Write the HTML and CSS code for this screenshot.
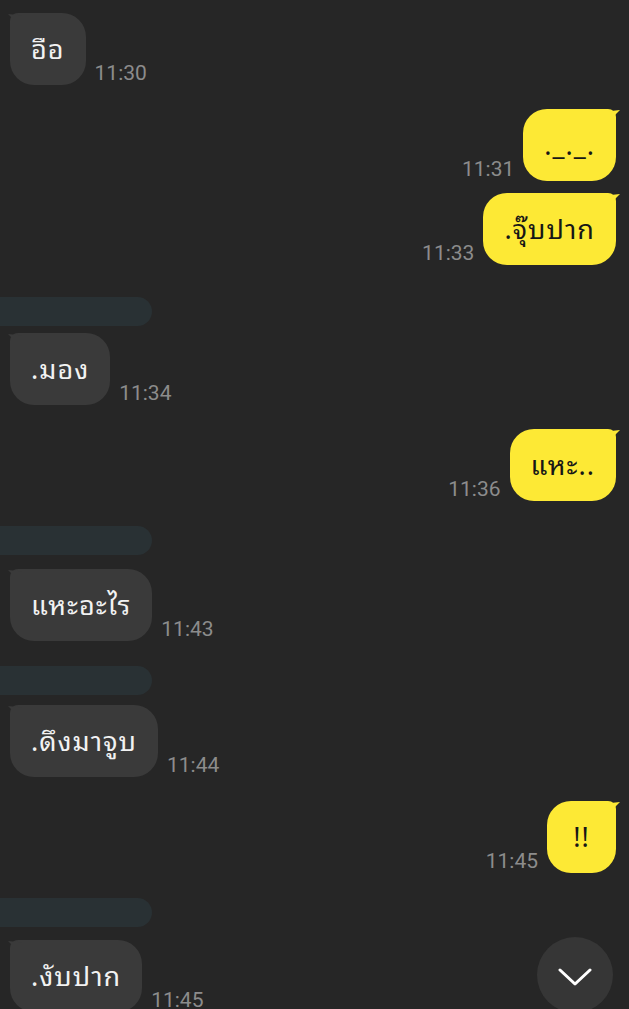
FILE: index.html
```html
<!DOCTYPE html>
<html lang="th">
<head>
<meta charset="UTF-8">
<title>Chat</title>
<link rel="stylesheet" href="styles.css">
</head>
<body>

<!-- ░░ messages ░░ -->
<main id="chat">
  <div class="row in"><div class="bubble">อือ</div><span class="time">11:30</span></div>
  <div class="row out gap-lg"><span class="time">11:31</span><div class="bubble">._._.</div></div>
  <div class="row out gap-sm"><span class="time">11:33</span><div class="bubble">.จุ๊บปาก</div></div>

  <div class="name first"></div>
  <div class="row in" style="margin-top:7px"><div class="bubble">.มอง</div><span class="time">11:34</span></div>
  <div class="row out gap-lg"><span class="time">11:36</span><div class="bubble">แหะ..</div></div>

  <div class="name"></div>
  <div class="row in" style="margin-top:14px"><div class="bubble">แหะอะไร</div><span class="time">11:43</span></div>

  <div class="name"></div>
  <div class="row in" style="margin-top:10px"><div class="bubble">.ดึงมาจูบ</div><span class="time">11:44</span></div>
  <div class="row out gap-lg"><span class="time">11:45</span><div class="bubble">!!</div></div>

  <div class="name"></div>
  <div class="row in" style="margin-top:13px"><div class="bubble">.งับปาก</div><span class="time">11:45</span></div>
</main>

<!-- ░░ jump to bottom ░░ -->
<button id="toBottom" title="Scroll down">
  <svg width="34" height="20" viewBox="0 0 34 20"><path d="M2 3 L17 17 L32 3" fill="none" stroke="#fff" stroke-width="3" stroke-linecap="round" stroke-linejoin="round"/></svg>
</button>

</body>
</html>
```

FILE: styles.css
```css
/* ===== colours ===== */
:root{ --bg:#262626; --in:#3a3a3a; --out:#fde935; --time:#8c8c8c; --name:#293134 }

/* ===== global ===== */
html,body{margin:0;height:100%;overflow:hidden}
body{background:var(--bg);font-family:"Noto Sans Thai Looped","Loma","Garuda","Tlwg Typo","Noto Sans","Noto Sans Thai",Roboto,sans-serif}

/* ---------- rows ---------- */
#chat{padding:13px 13px 0 8px}
.row{display:flex;align-items:flex-end;gap:9px}
.row.out{justify-content:flex-end}
.gap-lg{margin-top:24px}
.gap-sm{margin-top:12px}

.time{font-family:Roboto,sans-serif;font-size:21px;color:var(--time);padding-bottom:1px;line-height:1}

/* ---------- bubbles ---------- */
.bubble{
  position:relative;height:72px;min-width:69px;box-sizing:border-box;padding:0 21px 5px;
  display:flex;align-items:center;justify-content:center;font-size:27px;letter-spacing:1px;border-radius:24px
}
.in .bubble{background:var(--in);color:#f2f2f2;border-top-left-radius:8px;margin-left:2px}
.out .bubble{background:var(--out);color:#161616;border-top-right-radius:8px}
/* little tails on top corners */
.bubble::before{content:"";position:absolute;top:1px;width:14px;height:14px;background:inherit}
.in .bubble::before{left:-2px;clip-path:polygon(0 0,100% 10%,100% 100%)}
.out .bubble::before{right:-4px;clip-path:polygon(100% 0,0 10%,0 100%)}

/* ---------- blurred name bars ---------- */
.name{width:152px;height:29px;margin:25px 0 0 -8px;background:var(--name);border-radius:0 15px 15px 0}
.name.first{margin-top:32px}

/* ---------- scroll button ---------- */
#toBottom{
  position:fixed;left:537px;top:937px;width:76px;height:76px;border:none;border-radius:50%;
  background:#363636;display:flex;align-items:center;justify-content:center;padding:0;padding-top:4px;cursor:pointer
}
```
